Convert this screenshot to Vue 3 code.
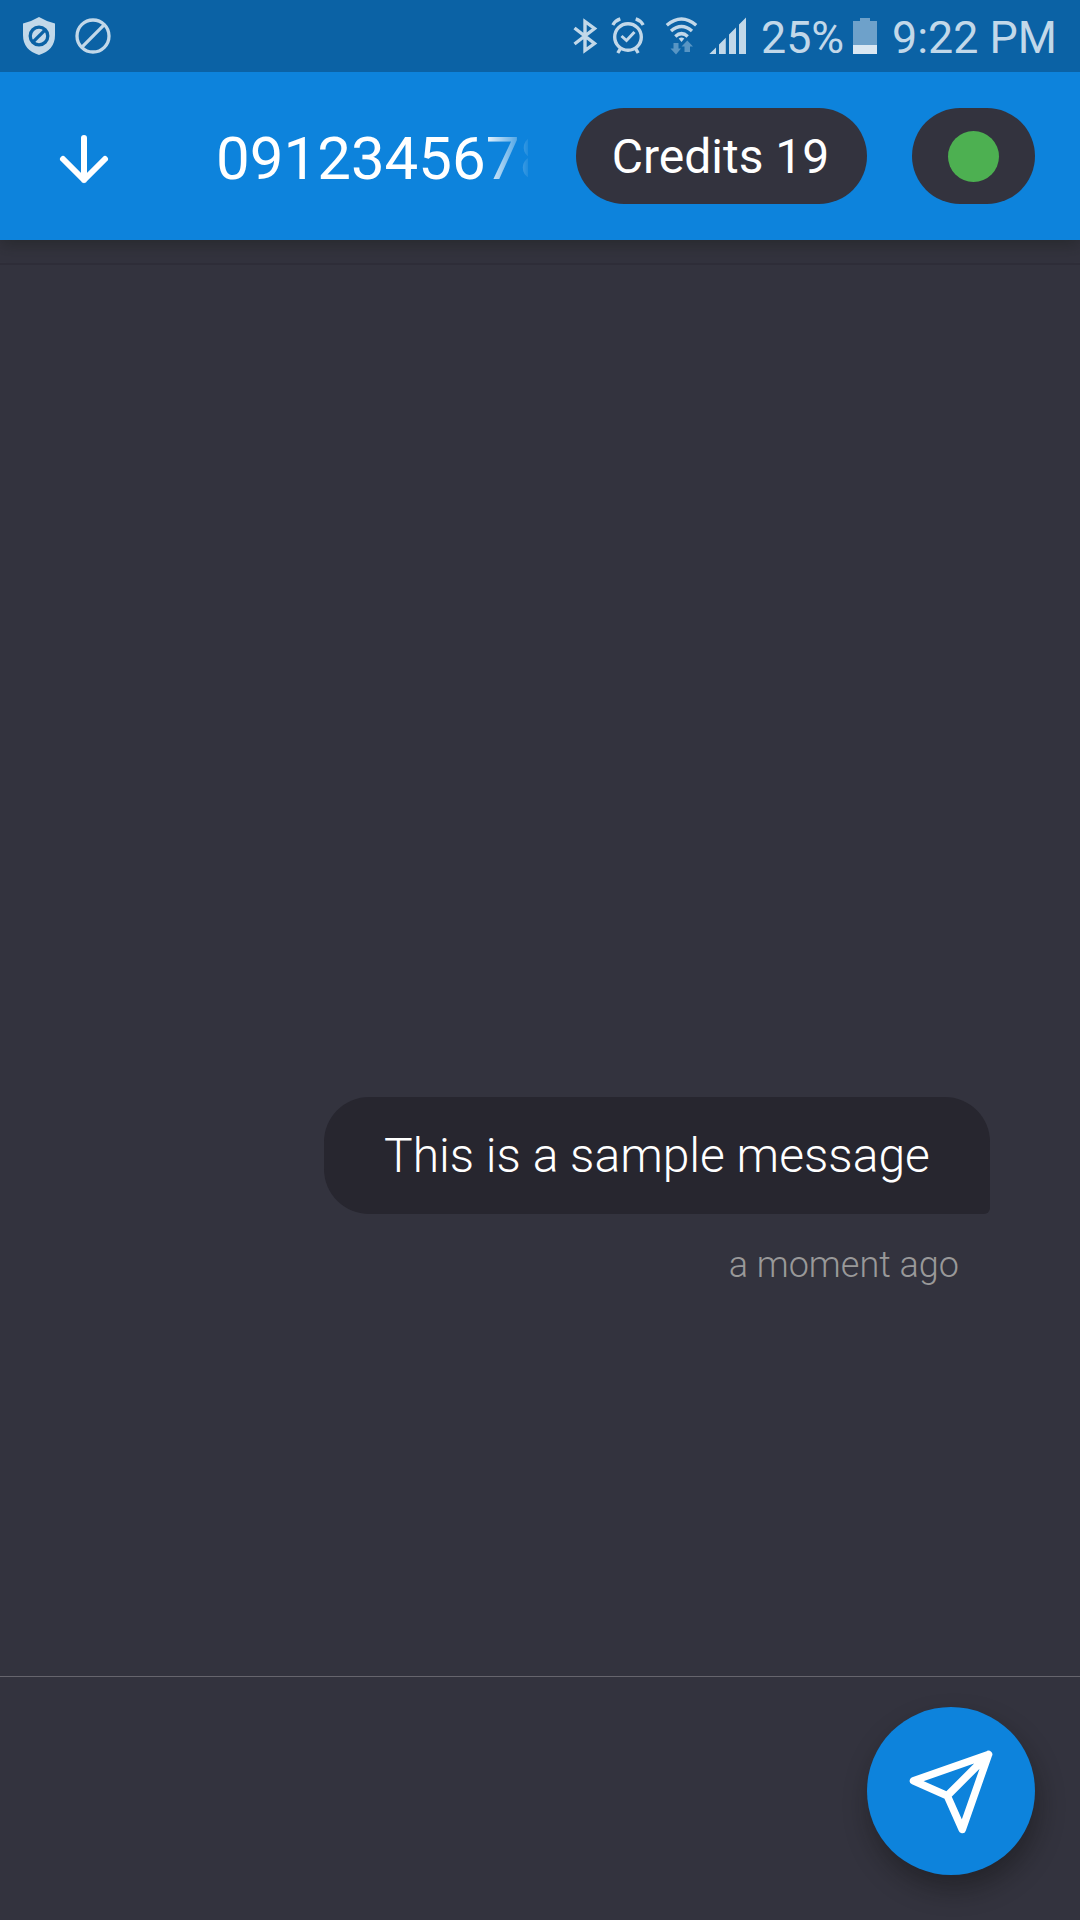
<script setup>
const phone = '09123456789'
const credits = 19
const message = { text: 'This is a sample message', time: 'a moment ago' }
</script>

<template>
  <div class="screen">
    <div class="status">
      <svg class="notices" width="120" height="72" viewBox="0 0 120 72">
        <path d="M39 17Q46.5 21.5 55 23.500V35Q55 50 39 55Q23 50 23 35V23.500Q31.500 21.500 39 17Z" fill="#c2d8e9" />
        <g fill="none" stroke="#0b62a5" stroke-width="3.3">
          <circle cx="39" cy="36" r="8.800" />
          <path d="M32.800 42.200L45.200 29.800" />
        </g>
        <g fill="none" stroke="#c2d8e9" stroke-width="3.300">
          <circle cx="93" cy="36" r="16" />
          <path d="M81.700 47.300L104.300 24.700" />
        </g>
      </svg>
      <svg class="radios" width="190" height="72" viewBox="560 0 190 72">
        <g fill="none" stroke="#c2d8e9" stroke-width="3.400">
          <path d="M574.500 28L594.500 43.500L585 50.500V21.500L594.500 28.500L574.500 44" />
          <circle cx="628" cy="37" r="13.300" />
          <path d="M621.500 36L626.500 40.500L634.500 32" stroke-width="3" />
          <path d="M612.800 25Q615.500 20.500 620.300 18.900M643.200 25Q640.500 20.500 635.700 18.900" />
          <path d="M620.500 48.500L617.800 53M635.500 48.500L638.200 53" />
          <path d="M666.800 25.200Q681.500 12.800 696.200 25.200" />
          <path d="M671 31Q681.500 21.800 692 31" />
          <path d="M675.300 36.400Q681.500 30.800 687.700 36.400" />
        </g>
        <path d="M678.700 38.500Q681.500 36.300 684.300 38.500L681.500 42Z" fill="#c2d8e9" />
        <path d="M673.500 43H678.500V48.500H681L676 54.500L670.500 48.500H673.500ZM684.500 52H690V46.500H693L687.300 40.500L681.500 46.500H684.500Z" fill="#5895c4" />
        <path d="M709.300 54L716 47.500V54ZM719 54V44.500L725.800 37.700V54ZM729 54V34.500L736 27.500V54ZM739 54V24.500L746 17.500V54Z" fill="#c2d8e9" />
      </svg>
      <span class="percent">25%</span>
      <svg class="battery" width="24" height="72" viewBox="0 0 24 72">
        <path d="M0 21H7V18H17V21H24V45H0Z" fill="#6ea1ca" />
        <path d="M0 45H24V54H0Z" fill="#dae7f2" />
      </svg>
      <span class="clock">9:22 PM</span>
    </div>

    <header class="bar">
      <svg class="down" width="72" height="72" viewBox="0 0 24 24" fill="none" stroke="#fff" stroke-width="2" stroke-linecap="round" stroke-linejoin="round">
        <path d="M12 5V19M19 12L12 19L5 12" />
      </svg>
      <div class="title">{{ phone }}</div>
      <div class="pill credits">Credits {{ credits }}</div>
      <div class="pill online"><i class="dot"></i></div>
    </header>

    <main class="thread">
      <div class="bubble">{{ message.text }}</div>
      <div class="time">{{ message.time }}</div>
    </main>

    <footer class="composer">
      <button class="send" aria-label="Send">
        <svg width="90" height="90" viewBox="0 0 24 24" fill="none" stroke="#fff" stroke-width="2" stroke-linecap="round" stroke-linejoin="round">
          <path d="M22 2L11 13M22 2L15 22L11 13L2 9Z" />
        </svg>
      </button>
    </footer>
  </div>
</template>

<style>
body {
  background: #33333e;
}
</style>

<style scoped>
.screen {
  width: 1080px;
  height: 1920px;
  display: flex;
  flex-direction: column;
  overflow: hidden;
  background: #33333e;
  color: #fff;
  font-family: Roboto, sans-serif;
}
svg {
  display: block;
  flex: none;
}
.status {
  position: relative;
  z-index: 1;
  height: 72px;
  flex: none;
  display: flex;
  background: #0b62a5;
  color: #c2d8e9;
  font-size: 44.8px;
  line-height: 76px;
  white-space: nowrap;
}
.radios {
  margin-left: 440px;
}
.percent {
  box-sizing: border-box;
  width: 103px;
  padding-left: 11px;
}
.clock {
  margin-left: 15px;
}
.bar {
  height: 168px;
  flex: none;
  display: flex;
  align-items: flex-start;
  background: #0d83dc;
  box-shadow: 0 4px 16px rgba(20, 25, 20, 0.4);
}
.down {
  margin: 51px 0 0 48px;
}
.title {
  width: 312px;
  margin: 51px 0 0 96px;
  font-size: 60px;
  line-height: 72px;
  white-space: nowrap;
  overflow: hidden;
  -webkit-mask-image: linear-gradient(90deg, #000 266px, transparent 316px);
  mask-image: linear-gradient(90deg, #000 266px, transparent 316px);
}
.pill {
  box-sizing: border-box;
  height: 96px;
  margin-top: 36px;
  border-radius: 48px;
  background: #33333e;
  display: flex;
  align-items: center;
  justify-content: center;
  font-size: 48px;
  white-space: nowrap;
}
.credits {
  width: 291px;
  margin-left: 48px;
  padding-right: 2px;
}
.online {
  width: 123px;
  margin-left: 45px;
}
.dot {
  width: 51px;
  height: 51px;
  border-radius: 50%;
  background: #4db051;
}
.thread {
  flex: 1;
  margin-top: 23px;
  border-top: 2px solid #2e2d38;
  display: flex;
  flex-direction: column;
  align-items: flex-end;
  padding: 832px 90px 0;
}
.bubble {
  box-sizing: border-box;
  width: 666px;
  height: 117px;
  padding-left: 60px;
  border-radius: 45px 45px 6px 45px;
  background: #27262f;
  font-size: 48px;
  font-weight: 300;
  line-height: 117px;
  white-space: nowrap;
}
.time {
  margin: 29px 31px 0 0;
  font-size: 36px;
  font-weight: 300;
  line-height: 44px;
  color: #999;
}
.composer {
  box-sizing: border-box;
  height: 244px;
  flex: none;
  display: flex;
  justify-content: flex-end;
  border-top: 1px solid #66656d;
  padding: 30px 45px 0;
}
.send {
  box-sizing: border-box;
  width: 168px;
  height: 168px;
  padding: 2px 0 0;
  border: 0;
  border-radius: 50%;
  background: #0d83dc;
  display: flex;
  align-items: center;
  justify-content: center;
  box-shadow: 3px 14px 26px rgba(15, 15, 15, 0.4);
}
</style>
